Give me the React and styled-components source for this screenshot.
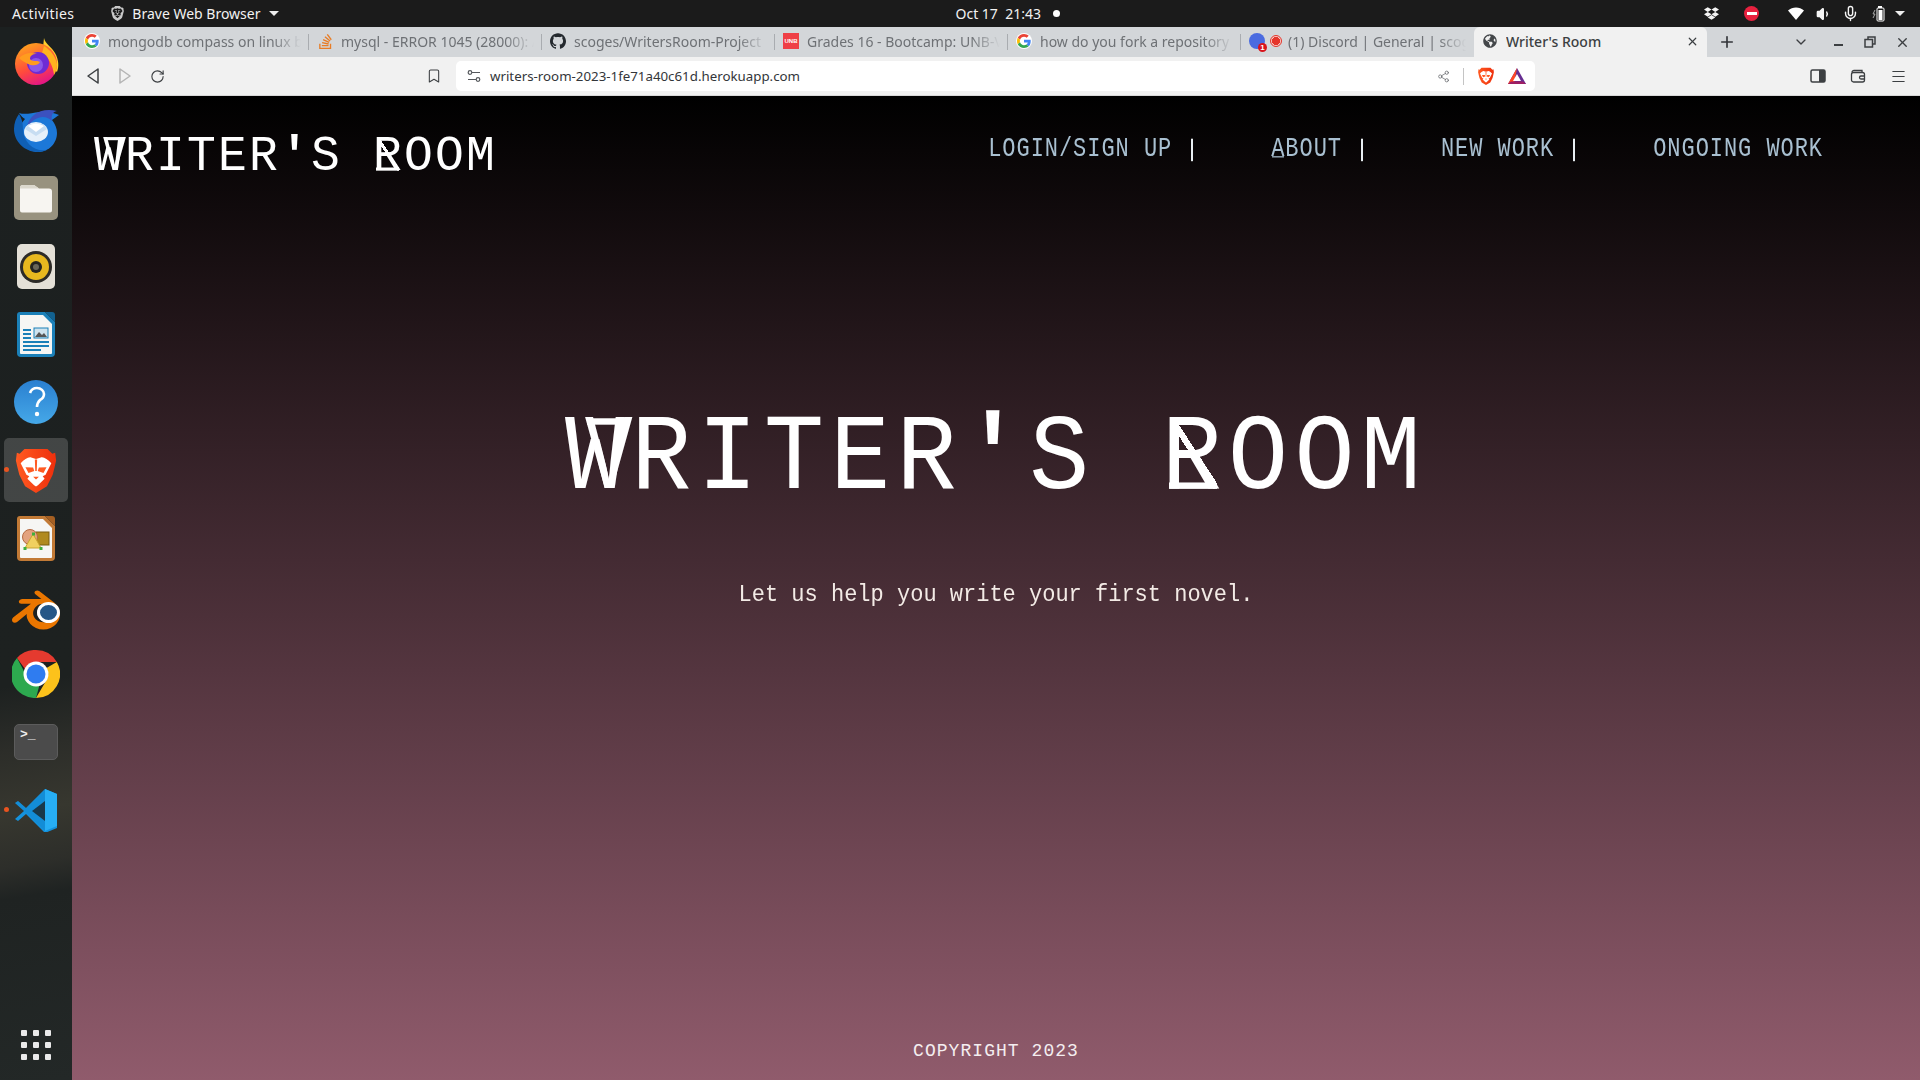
import React from "react";
import styled, { createGlobalStyle } from "styled-components";
import { SiBrave, SiGithub, SiStackoverflow, SiDropbox, SiBlender } from "react-icons/si";
import { FaGlobeAmericas } from "react-icons/fa";
import { ChevronDown, Plus, X, RotateCw, Bookmark, Share2, Menu, Mic, Volume1 } from "lucide-react";

const Global = createGlobalStyle`
  html, body { margin: 0; padding: 0; background: #000; }
  * { box-sizing: border-box; }
`;

const Screen = styled.div`
  width: 1920px;
  height: 1080px;
  overflow: hidden;
  display: flex;
  flex-direction: column;
  font-family: "Noto Sans", sans-serif;
`;

/* ---------- gnome top bar ---------- */
const TopBar = styled.div`
  height: 27px;
  flex: none;
  background: #1b1b1b;
  color: #f2f2f2;
  font-size: 14px;
  display: flex;
  align-items: center;
  padding-left: 12px;
`;
const Activities = styled.span`
  letter-spacing: 0.4px;
`;
const AppMenu = styled.div`
  display: flex;
  align-items: center;
  gap: 7px;
  margin-left: 36px;
`;
const Caret = styled.span`
  width: 0;
  height: 0;
  margin-left: 1px;
  border-left: 5px solid transparent;
  border-right: 5px solid transparent;
  border-top: 5px solid #eee;
`;
const Clock = styled.div`
  margin-left: 677px;
  display: flex;
  align-items: center;
  gap: 12px;
`;
const Dot = styled.span`
  width: 7px;
  height: 7px;
  border-radius: 50%;
  background: #fff;
`;
const Tray = styled.div`
  margin-left: auto;
  display: flex;
  align-items: center;
  padding-right: 15px;
`;
const TrayItem = styled.span`
  display: flex;
  margin-left: ${(p) => p.$gap}px;
`;
const NoEntry = styled.span`
  width: 15px;
  height: 15px;
  border-radius: 50%;
  background: #e8213f;
  display: flex;
  align-items: center;
  justify-content: center;
  &::after {
    content: "";
    width: 10px;
    height: 3px;
    background: #fff;
  }
`;

const Body = styled.div`
  flex: 1;
  display: flex;
  min-height: 0;
`;

/* ---------- dock ---------- */
const Dock = styled.div`
  width: 72px;
  flex: none;
  display: flex;
  flex-direction: column;
  padding: 1px 0;
  background: linear-gradient(170deg, #1c2020 0%, #1d2120 62%, #2c2d29 68%, #37372f 74%, #2d2e2a 79%, #1f2322 82%, #232827 100%);
`;
const DockCell = styled.div`
  position: relative;
  height: 68px;
  flex: none;
  display: flex;
  align-items: center;
  justify-content: center;
  ${(p) => p.$bottom && "margin-top: auto;"}
  ${(p) =>
    p.$active &&
    `&::before {
      content: "";
      position: absolute;
      left: 4px;
      right: 4px;
      top: 2px;
      bottom: 2px;
      border-radius: 5px;
      background: rgba(255, 255, 255, 0.17);
    }`}
  ${(p) =>
    p.$running &&
    `&::after {
      content: "";
      position: absolute;
      left: 4px;
      top: 31px;
      width: 5px;
      height: 5px;
      border-radius: 50%;
      background: #e95420;
    }`}
  svg {
    position: relative;
  }
`;
const TerminalTile = styled.div`
  width: 44px;
  height: 36px;
  border-radius: 5px;
  background: #4b4b4b;
  border: 1px solid #5c5c5c;
  color: #eee;
  font: 700 13px/1 "Liberation Mono", monospace;
  padding: 3px 0 0 5px;
`;
const AppGrid = styled.div`
  display: grid;
  grid-template-columns: repeat(3, 6px);
  gap: 6px;
  span {
    width: 6px;
    height: 6px;
    border-radius: 1px;
    background: #eaeaea;
  }
`;
const BlenderMark = styled.span`
  position: relative;
  display: flex;
  margin-top: 7px;
  &::after {
    content: "";
    position: absolute;
    left: 25px;
    top: 16px;
    width: 17px;
    height: 15px;
    border-radius: 50%;
    background: #265787;
    border: 3px solid #fff;
  }
`;

/* ---------- browser chrome ---------- */
const Browser = styled.div`
  flex: 1;
  min-width: 0;
  display: flex;
  flex-direction: column;
`;
const TabStrip = styled.div`
  height: 30px;
  flex: none;
  background: #d3d6d9;
  display: flex;
  padding-left: 4px;
`;
const Tab = styled.div`
  width: 233px;
  flex: none;
  display: flex;
  align-items: center;
  gap: 8px;
  padding: 0 8px 2px;
  font-size: 14px;
  color: ${(p) => (p.$active ? "#3c3f42" : "#6e7175")};
  background: ${(p) => (p.$active ? "#f1f1f1" : "transparent")};
  border-radius: ${(p) => (p.$active ? "6px 6px 0 0" : "0")};
  font-weight: ${(p) => (p.$active ? 500 : 400)};
  position: relative;
  ${(p) =>
    !p.$active &&
    !p.$noSep &&
    `&::after {
      content: "";
      position: absolute;
      right: 0;
      top: 7px;
      bottom: 7px;
      width: 1px;
      background: #a9acb0;
    }`}
`;
const TabIcon = styled.span`
  width: 16px;
  height: 16px;
  flex: none;
  display: flex;
  align-items: center;
  justify-content: center;
`;
const TabTitle = styled.span`
  flex: 1;
  min-width: 0;
  white-space: nowrap;
  overflow: hidden;
  ${(p) =>
    !p.$active &&
    `-webkit-mask-image: linear-gradient(to right, #000 85%, transparent 100%);
     mask-image: linear-gradient(to right, #000 85%, transparent 100%);`}
`;
const NewTab = styled.span`
  display: flex;
  align-self: center;
  margin-left: 11px;
  color: #33363a;
`;
const WindowControls = styled.div`
  margin-left: auto;
  display: flex;
  align-items: center;
  padding-right: 2px;
  color: #3c3f42;
`;
const WindowButton = styled.span`
  width: 32px;
  display: flex;
  justify-content: center;
  ${(p) => p.$spaced && "margin-right: 5px;"}
`;
const Toolbar = styled.div`
  height: 39px;
  flex: none;
  background: #f1f1f1;
  border-bottom: 1px solid #d8d8d8;
  display: flex;
  align-items: center;
  padding: 0 6px 0 5px;
  color: #3c3f42;
`;
const ToolButton = styled.span`
  width: 32px;
  flex: none;
  display: flex;
  justify-content: center;
  ${(p) => p.$after && `margin-left: ${p.$after}px;`}
`;
const AddressBar = styled.div`
  width: 1079px;
  height: 30px;
  margin-left: 6px;
  flex: none;
  border-radius: 5px;
  background: #fff;
  display: flex;
  align-items: center;
  gap: 9px;
  padding: 0 9px 0 11px;
  font-size: 13.3px;
  color: #33363a;
`;
const AddressActions = styled.div`
  margin-left: auto;
  display: flex;
  align-items: center;
  gap: 13px;
`;
const Divider = styled.span`
  width: 1px;
  height: 17px;
  background: #c4c4c4;
`;
const ToolbarEnd = styled.div`
  margin-left: auto;
  display: flex;
  gap: 8px;
`;

/* ---------- the page itself ---------- */
const Page = styled.div`
  flex: 1;
  min-height: 0;
  display: flex;
  flex-direction: column;
  align-items: center;
  background: linear-gradient(180deg, #000 0%, #905b6c 100%);
  font-family: "Liberation Mono", monospace;
  color: #fff;
`;
const Header = styled.header`
  width: 100%;
  height: 121px;
  flex: none;
  display: flex;
  justify-content: space-between;
  align-items: center;
  padding: 0 97px 0 22px;
`;
const Logo = styled.div`
  font-size: 48px;
  line-height: 1.2;
  letter-spacing: 2.2px;
  white-space: pre;
  transform: scaleY(1.05);
`;
const Nav = styled.nav`
  display: flex;
  padding-bottom: 12px;
`;
const NavItem = styled.a`
  font-size: 22px;
  line-height: 1.2;
  letter-spacing: 0.95px;
  color: #a9c0d1;
  white-space: pre;
  display: flex;
  align-items: center;
  margin-left: ${(p) => p.$gap}px;
  transform: scaleY(1.25);
`;
const NavBar = styled.span`
  width: 2px;
  height: 18px;
  margin-left: ${(p) => p.$gap}px;
  background: #e8eef2;
`;
const AltA = styled.span`
  position: relative;
  display: inline-block;
  &::after {
    content: "";
    position: absolute;
    left: 0.04em;
    right: 0.08em;
    top: 0.8em;
    height: 0.06em;
    background: #a9c0d1;
  }
`;
const Ornate = styled.span`
  position: relative;
  display: inline-block;
`;
const OrnateW = styled(Ornate)`
  &::before {
    content: "";
    position: absolute;
    left: 0.22em;
    width: 0.41em;
    top: 0.205em;
    height: 0.06em;
    background: #fff;
  }
  &::after {
    content: "V";
    position: absolute;
    left: 0.13em;
    top: 0;
    transform: scaleX(0.8);
  }
`;
const OrnateR = styled(Ornate)`
  &::before {
    content: "";
    position: absolute;
    left: 0.07em;
    width: 0.46em;
    top: 0.81em;
    height: 0.06em;
    background: #fff;
  }
  &::after {
    content: "";
    position: absolute;
    left: 0.09em;
    width: 0.46em;
    top: 0.205em;
    height: 0.66em;
    background: linear-gradient(
      to top right,
      transparent calc(50% - 0.03em),
      #fff calc(50% - 0.03em),
      #fff calc(50% + 0.03em),
      transparent calc(50% + 0.03em)
    );
  }
`;
const Apostrophe = styled.span`
  font-weight: 700;
`;
const Hero = styled.h1`
  margin: 183px 0 0;
  font-size: 100px;
  line-height: 1.2;
  font-weight: 400;
  letter-spacing: 6.3px;
  white-space: pre;
  transform: scaleY(1.07);
`;
const Tagline = styled.p`
  margin: 60px 0 0;
  font-size: 22px;
  line-height: 30px;
  color: #f3ebe6;
  transform: scaleY(1.12);
`;
const Footer = styled.footer`
  margin-top: auto;
  padding-bottom: 17px;
  font-size: 18px;
  line-height: 24px;
  letter-spacing: 1.05px;
  color: #f4eef0;
`;

/* ---------- drawn icons ---------- */
const Firefox = () => (
  <svg width="48" height="48" viewBox="0 0 48 48">
    <defs>
      <linearGradient id="ffBody" x1="0.2" y1="0.1" x2="0.6" y2="1">
        <stop offset="0" stopColor="#ff9a1f" />
        <stop offset="0.55" stopColor="#ff4a3d" />
        <stop offset="1" stopColor="#e31587" />
      </linearGradient>
    </defs>
    <path d="M32 0c1 6 8 9 11 15 4 7 4 14 2 19L30 20z" fill="#ffd02c" />
    <circle cx="24" cy="26" r="21" fill="url(#ffBody)" />
    <path d="M32 8c6 4 12 10 13 18 0 4-1 8-3 11-1-9-5-17-12-22z" fill="#ffb31f" />
    <circle cx="26" cy="25" r="11" fill="#6e2bd4" />
    <circle cx="24" cy="27" r="7" fill="#8a58e8" />
    <path d="M7 20c5-5 12-6 18-4-5 0-7 2-7 5 2 3 7 1 10 3-2 4-8 4-12 2-3-2-6-3-9-6z" fill="#ff9c1e" />
  </svg>
);
const Thunderbird = () => (
  <svg width="50" height="50" viewBox="0 0 50 50">
    <path d="M8 8c2 3 4 5 6 6-4 4-6 9-6 14 0 10 8 19 19 19 11 0 19-9 19-19 0-5-2-9-5-13 3-2 5-4 7-5-5-2-12-4-19-3C20 8 14 10 8 8z" fill="#1c78d8" />
    <path d="M3 24c0 12 10 23 24 23 3 0 6-1 9-2-13 2-23-7-24-20 0-7-1-11-4-16-3 4-5 9-5 15z" fill="#0f5fb5" />
    <path d="M16 22C18 10 30 2 46 6c-5 1-6 5-5 10-7-7-17-5-25 6z" fill="#3b51bf" />
    <ellipse cx="25" cy="27" rx="12" ry="10" fill="#e6f0fa" />
    <path d="M14 24l11 7 11-7-4-5H18z" fill="#c7ddf2" />
    <path d="M17 21l8 6 8-6c-5-3-11-3-16 0z" fill="#fff" />
  </svg>
);
const Files = () => (
  <svg width="44" height="44" viewBox="0 0 44 44">
    <rect x="0" y="0" width="44" height="44" rx="5" fill="#98927f" />
    <path d="M6 12a3 3 0 0 1 3-3h11l5 3.500h10a3 3 0 0 1 3 3v19a2 2 0 0 1-2 2H8a2 2 0 0 1-2-2z" fill="#f7f5f1" />
    <path d="M6 12a3 3 0 0 1 3-3h11l5 3.500H6z" fill="#dcd8cd" />
  </svg>
);
const Rhythmbox = () => (
  <svg width="38" height="45" viewBox="0 0 38 45">
    <rect width="38" height="45" rx="5" fill="#e4e0d7" />
    <circle cx="19" cy="23" r="16" fill="#2d2b28" />
    <circle cx="19" cy="23" r="13" fill="#e8b81f" />
    <circle cx="19" cy="23" r="6" fill="#262421" />
    <circle cx="19" cy="23" r="3" fill="#6b6658" />
  </svg>
);
const DocIcon = ({ edge, fold, children }) => (
  <svg width="38" height="45" viewBox="0 0 38 45">
    <path d="M3 0h25l10 10v31a4 4 0 0 1-4 4H4a4 4 0 0 1-4-4V3a3 3 0 0 1 3-3z" fill={edge} />
    <path d="M3 3h23l9 9v29a1 1 0 0 1-1 1H4a1 1 0 0 1-1-1z" fill="#f6f6f4" />
    <path d="M28 0l10 10V3a3 3 0 0 0-3-3z" fill={fold} />
    {children}
  </svg>
);
const Writer = () => (
  <DocIcon edge="#1b80b8" fold="#12618f">
    <g fill="#1b80b8">
      <rect x="6" y="17" width="8" height="2" />
      <rect x="6" y="21" width="8" height="2" />
      <rect x="6" y="25" width="8" height="2" />
      <rect x="6" y="29" width="26" height="2" />
      <rect x="6" y="33" width="26" height="2" />
      <rect x="6" y="37" width="18" height="2" />
    </g>
    <rect x="17" y="16" width="14" height="10" fill="#cfe3ee" stroke="#1b80b8" />
    <path d="M18 25l4-5 3 3 2-2 3 4z" fill="#555" />
  </DocIcon>
);
const HelpBall = () => (
  <svg width="44" height="44" viewBox="0 0 44 44">
    <defs>
      <linearGradient id="helpBg" x1="0" y1="0" x2="0" y2="1">
        <stop offset="0" stopColor="#2a7fd0" />
        <stop offset="1" stopColor="#45a8e8" />
      </linearGradient>
    </defs>
    <circle cx="22" cy="22" r="22" fill="url(#helpBg)" />
    <path d="M16 13c1-3 4-5 7-5 4 0 7 3 7 6 0 3-2 5-4 6-2 2-3 4-3 7" fill="none" stroke="#fff" strokeWidth="2.600" />
    <circle cx="23" cy="34" r="2.200" fill="#fff" />
  </svg>
);
const BraveLogo = ({ size = 46 }) => (
  <svg width={size} height={size} viewBox="0 0 24 24" style={{ display: "block" }}>
    <defs>
      <linearGradient id="braveBg" x1="0" y1="0" x2="1" y2="0">
        <stop offset="0" stopColor="#ff5a22" />
        <stop offset="1" stopColor="#ee2f0c" />
      </linearGradient>
    </defs>
    <path d="M6 1h12l2.500 2.500L22 3l.5 4-.8 3.500-1 4-3 6L12 24l-5.700-3.500-3-6-1-4L1.500 7 2 3l1.500.5z" fill="url(#braveBg)" />
    <path d="M4 8.500C6 6.500 8 5 9.500 5.500l2.500.8 2.500-.8C16 5 18 6.500 20 8.500l-3 6-1.500.8 1 1.200-3.500 3.500-1 .6-1-.6-3.500-3.500 1-1.200-1.500-.8z" fill="#fff" />
    <path d="M6.500 10.500l4 .2.600 1.800-3 1zM17.500 10.500l-4 .2-.6 1.800 3 1zM10.500 15.500h3L12 17zM11.400 6.500h1.200l-.2 6h-.8z" fill="#ff5a22" />
  </svg>
);
const Impress = () => (
  <DocIcon edge="#c27a36" fold="#a55f22">
    <rect x="19" y="16" width="13" height="13" fill="#b08a1f" stroke="#7a5d10" />
    <circle cx="13" cy="21" r="7.500" fill="#e3a27f" stroke="#b46a42" />
    <path d="M16 18l8 14H8z" fill="#f0d060" stroke="#c9a530" />
    <g fill="#3fae3f">
      <rect x="15" y="16.500" width="3" height="3" />
      <rect x="6.500" y="31" width="3" height="3" />
      <rect x="22.500" y="31" width="3" height="3" />
    </g>
  </DocIcon>
);
const Blender = () => (
  <BlenderMark>
    <SiBlender size={48} color="#ea7600" />
  </BlenderMark>
);
const Chrome = () => (
  <svg width="48" height="48" viewBox="0 0 48 48">
    <path d="M24 0a24 24 0 0 1 20.800 12H24a12 12 0 0 0-11 7L5 8A24 24 0 0 1 24 0z" fill="#e53a2f" />
    <path d="M44.800 12A24 24 0 0 1 24 48l10.500-18a12 12 0 0 0 0-12z" fill="#fcc21b" />
    <path d="M24 48A24 24 0 0 1 5 8l8.500 16a12 12 0 0 0 14 11z" fill="#2da94f" />
    <circle cx="24" cy="24" r="12.500" fill="#fff" />
    <circle cx="24" cy="24" r="9.500" fill="#2f7cf0" />
  </svg>
);
const VsCode = () => (
  <svg width="44" height="44" viewBox="0 0 44 44">
    <path d="M31 1L12 20 4 13l-3 2 9 8-9 8 3 2 8-7 19 19 12-5V6z" fill="#1492dd" />
    <path d="M31 1l12 5v32l-12 5z" fill="#27aef5" />
    <path d="M31 13L18 23l13 10z" fill="#1d2120" />
    <path d="M31 1v42L4 17l-3-2 3-2 8 7z" fill="#0f7fc6" opacity="0.25" />
  </svg>
);
const GoogleG = () => (
  <svg width="14" height="14" viewBox="0 0 48 48">
    <path fill="#EA4335" d="M24 9.500c3.540 0 6.710 1.220 9.210 3.600l6.850-6.850C35.900 2.380 30.470 0 24 0 14.620 0 6.510 5.380 2.560 13.220l7.980 6.190C12.430 13.720 17.740 9.500 24 9.500z" />
    <path fill="#4285F4" d="M46.980 24.550c0-1.570-.15-3.090-.38-4.550H24v9.020h12.940c-.58 2.960-2.260 5.480-4.780 7.180l7.730 6c4.510-4.180 7.090-10.360 7.090-17.650z" />
    <path fill="#FBBC05" d="M10.530 28.590c-.48-1.450-.76-2.990-.76-4.590s.27-3.140.76-4.590l-7.980-6.190C.92 16.460 0 20.120 0 24c0 3.880.92 7.540 2.560 10.780l7.970-6.190z" />
    <path fill="#34A853" d="M24 48c6.480 0 11.930-2.130 15.890-5.810l-7.730-6c-2.150 1.450-4.920 2.300-8.160 2.300-6.260 0-11.570-4.220-13.470-9.910l-7.980 6.190C6.510 42.620 14.620 48 24 48z" />
  </svg>
);
const GoogleFav = styled.span`
  width: 16px;
  height: 16px;
  border-radius: 50%;
  background: #fff;
  display: flex;
  align-items: center;
  justify-content: center;
`;
const UnbFav = styled.span`
  width: 16px;
  height: 16px;
  background: #ef3f46;
  color: #fff;
  font: 700 6px/16px "Liberation Sans", sans-serif;
  text-align: center;
`;
const DiscordFav = styled.span`
  position: relative;
  width: 16px;
  height: 16px;
  border-radius: 50%;
  background: #4a6be0;
  &::after {
    content: "1";
    position: absolute;
    right: -2px;
    bottom: -3px;
    width: 9px;
    height: 9px;
    border-radius: 50%;
    background: #d8141c;
    color: #fff;
    font: 700 8px/9px "Liberation Sans", sans-serif;
    text-align: center;
  }
`;
const RecordFav = styled.span`
  width: 12px;
  height: 12px;
  border-radius: 50%;
  border: 1px solid #e5352b;
  background: radial-gradient(circle, #e5352b 55%, #f7c9c5 60%);
  margin: 0 -2px 0 -3px;
  flex: none;
`;
const Triangle = ({ muted }) => (
  <svg width="14" height="18" viewBox="0 0 14 18">
    <path d={muted ? "M2 2l10 7-10 7z" : "M12 2L2 9l10 7z"} fill="none" stroke={muted ? "#b4b4b4" : "#3c3f42"} strokeWidth="1.500" strokeLinejoin="round" />
  </svg>
);
const SiteTune = () => (
  <svg width="14" height="14" viewBox="0 0 14 14" fill="none" stroke="#55585c" strokeWidth="1.200">
    <circle cx="3" cy="3.500" r="1.800" />
    <path d="M5 3.500h8M1 10.500h8" />
    <circle cx="11" cy="10.500" r="1.800" />
  </svg>
);
const BatTriangle = () => (
  <svg width="18" height="16" viewBox="0 0 18 16">
    <path d="M9 0l9 16H0z" fill="#662d91" />
    <path d="M9 0L0 16h6z" fill="#ff4724" />
    <path d="M0 16h18l-3-2.500H3z" fill="#9e1f63" />
    <path d="M9 6l4 7H5z" fill="#fff" />
  </svg>
);
const SidePanel = () => (
  <svg width="16" height="16" viewBox="0 0 16 16">
    <rect x="1" y="2" width="14" height="12" rx="1.500" fill="none" stroke="#3c3f42" strokeWidth="1.500" />
    <rect x="9" y="2" width="6" height="12" fill="#3c3f42" />
  </svg>
);
const Wallet = () => (
  <svg width="16" height="16" viewBox="0 0 16 16" fill="none" stroke="#3c3f42" strokeWidth="1.300">
    <path d="M2 4.500C2 3 3 2.500 4 2.500h8v2" />
    <rect x="1.500" y="4.500" width="13" height="9.500" rx="2" />
    <path d="M14.500 8H11a1.500 1.500 0 0 0 0 3h3.500" />
  </svg>
);
const Restore = () => (
  <svg width="12" height="12" viewBox="0 0 12 12" fill="none" stroke="#3c3f42" strokeWidth="1.500">
    <path d="M4 3V1h7v7H9" />
    <rect x="1" y="3.500" width="7.500" height="7.500" />
  </svg>
);
const MinBar = styled.span`
  width: 9px;
  height: 2px;
  margin-top: 6px;
  background: #3c3f42;
`;
const Wifi = () => (
  <svg width="16" height="14" viewBox="0 0 16 14">
    <path d="M8 13L0 3.500C4.500-.5 11.500-.5 16 3.500z" fill="#fff" />
  </svg>
);
const Battery = () => (
  <svg width="14" height="18" viewBox="0 0 14 18">
    <path d="M3 5L1 9h2l-2 4" fill="none" stroke="#aaa" strokeWidth="1" />
    <rect x="6" y="1" width="4" height="2" fill="#fff" />
    <rect x="5" y="3" width="7" height="13" rx="1" fill="#1b1b1b" stroke="#fff" />
    <rect x="6.500" y="5" width="4" height="10" fill="#fff" />
  </svg>
);

const dockApps = [
  { id: "firefox", icon: <Firefox /> },
  { id: "thunderbird", icon: <Thunderbird /> },
  { id: "files", icon: <Files /> },
  { id: "rhythmbox", icon: <Rhythmbox /> },
  { id: "writer", icon: <Writer /> },
  { id: "help", icon: <HelpBall /> },
  { id: "brave", icon: <BraveLogo />, active: true, running: true },
  { id: "impress", icon: <Impress /> },
  { id: "blender", icon: <Blender /> },
  { id: "chrome", icon: <Chrome /> },
  { id: "terminal", icon: <TerminalTile>&gt;_</TerminalTile> },
  { id: "vscode", icon: <VsCode />, running: true },
];

const google = (
  <GoogleFav>
    <GoogleG />
  </GoogleFav>
);
const tabs = [
  { title: "mongodb compass on linux b", icon: google },
  { title: "mysql - ERROR 1045 (28000): A", icon: <SiStackoverflow size={15} color="#e87c25" /> },
  { title: "scoges/WritersRoom-Project", icon: <SiGithub size={16} color="#24292e" /> },
  { title: "Grades 16 - Bootcamp: UNB-V", icon: <UnbFav>UNB</UnbFav> },
  { title: "how do you fork a repository", icon: google },
  { title: "(1) Discord | General | scoges", icon: <DiscordFav />, extra: <RecordFav />, noSep: true },
];

const BrandName = () => (
  <>
    <OrnateW>W</OrnateW>RITER<Apostrophe>'</Apostrophe>S <OrnateR>R</OrnateR>OOM
  </>
);

export default function App() {
  return (
    <Screen>
      <Global />
      <TopBar>
        <Activities>Activities</Activities>
        <AppMenu>
          <SiBrave size={15} color="#c9c9c9" />
          <span>Brave Web Browser</span>
          <Caret />
        </AppMenu>
        <Clock>
          <span>Oct 17&nbsp;&nbsp;21:43</span>
          <Dot />
        </Clock>
        <Tray>
          <TrayItem $gap={0}>
            <SiDropbox size={15} color="#f5f5f5" />
          </TrayItem>
          <TrayItem $gap={25}>
            <NoEntry />
          </TrayItem>
          <TrayItem $gap={29}>
            <Wifi />
          </TrayItem>
          <TrayItem $gap={12}>
            <Volume1 size={16} color="#f5f5f5" fill="#f5f5f5" />
          </TrayItem>
          <TrayItem $gap={10}>
            <Mic size={17} color="#f5f5f5" />
          </TrayItem>
          <TrayItem $gap={13}>
            <Battery />
          </TrayItem>
          <TrayItem $gap={8}>
            <Caret />
          </TrayItem>
        </Tray>
      </TopBar>
      <Body>
        <Dock>
          {dockApps.map((app) => (
            <DockCell key={app.id} $active={app.active} $running={app.running}>
              {app.icon}
            </DockCell>
          ))}
          <DockCell $bottom>
            <AppGrid>
              {Array.from({ length: 9 }, (_, i) => (
                <span key={i} />
              ))}
            </AppGrid>
          </DockCell>
        </Dock>
        <Browser>
          <TabStrip>
            {tabs.map((tab) => (
              <Tab key={tab.title} $noSep={tab.noSep}>
                <TabIcon>{tab.icon}</TabIcon>
                {tab.extra}
                <TabTitle>{tab.title}</TabTitle>
              </Tab>
            ))}
            <Tab $active>
              <TabIcon>
                <FaGlobeAmericas size={14} color="#44474a" />
              </TabIcon>
              <TabTitle $active>Writer's Room</TabTitle>
              <X size={13} strokeWidth={2.2} />
            </Tab>
            <NewTab>
              <Plus size={18} strokeWidth={2.2} />
            </NewTab>
            <WindowControls>
              <WindowButton $spaced>
                <ChevronDown size={16} />
              </WindowButton>
              <WindowButton>
                <MinBar />
              </WindowButton>
              <WindowButton>
                <Restore />
              </WindowButton>
              <WindowButton>
                <X size={15} strokeWidth={2.2} />
              </WindowButton>
            </WindowControls>
          </TabStrip>
          <Toolbar>
            <ToolButton>
              <Triangle />
            </ToolButton>
            <ToolButton>
              <Triangle muted />
            </ToolButton>
            <ToolButton>
              <RotateCw size={15} strokeWidth={1.8} />
            </ToolButton>
            <ToolButton $after={245}>
              <Bookmark size={16} strokeWidth={1.6} />
            </ToolButton>
            <AddressBar>
              <SiteTune />
              <span>writers-room-2023-1fe71a40c61d.herokuapp.com</span>
              <AddressActions>
                <Share2 size={13} color="#66696d" strokeWidth={1.4} />
                <Divider />
                <BraveLogo size={18} />
                <BatTriangle />
              </AddressActions>
            </AddressBar>
            <ToolbarEnd>
              <ToolButton>
                <SidePanel />
              </ToolButton>
              <ToolButton>
                <Wallet />
              </ToolButton>
              <ToolButton>
                <Menu size={17} strokeWidth={1.6} />
              </ToolButton>
            </ToolbarEnd>
          </Toolbar>
          <Page>
            <Header>
              <Logo>
                <BrandName />
              </Logo>
              <Nav>
                <NavItem $gap={0}>
                  LOGIN/SIGN UP
                  <NavBar $gap={19} />
                </NavItem>
                <NavItem $gap={78}>
                  <span>
                    <AltA>A</AltA>BOUT
                  </span>
                  <NavBar $gap={19} />
                </NavItem>
                <NavItem $gap={78}>
                  NEW WORK
                  <NavBar $gap={19} />
                </NavItem>
                <NavItem $gap={78}>ONGOING WORK</NavItem>
              </Nav>
            </Header>
            <Hero>
              <BrandName />
            </Hero>
            <Tagline>Let us help you write your first novel.</Tagline>
            <Footer>COPYRIGHT 2023</Footer>
          </Page>
        </Browser>
      </Body>
    </Screen>
  );
}
